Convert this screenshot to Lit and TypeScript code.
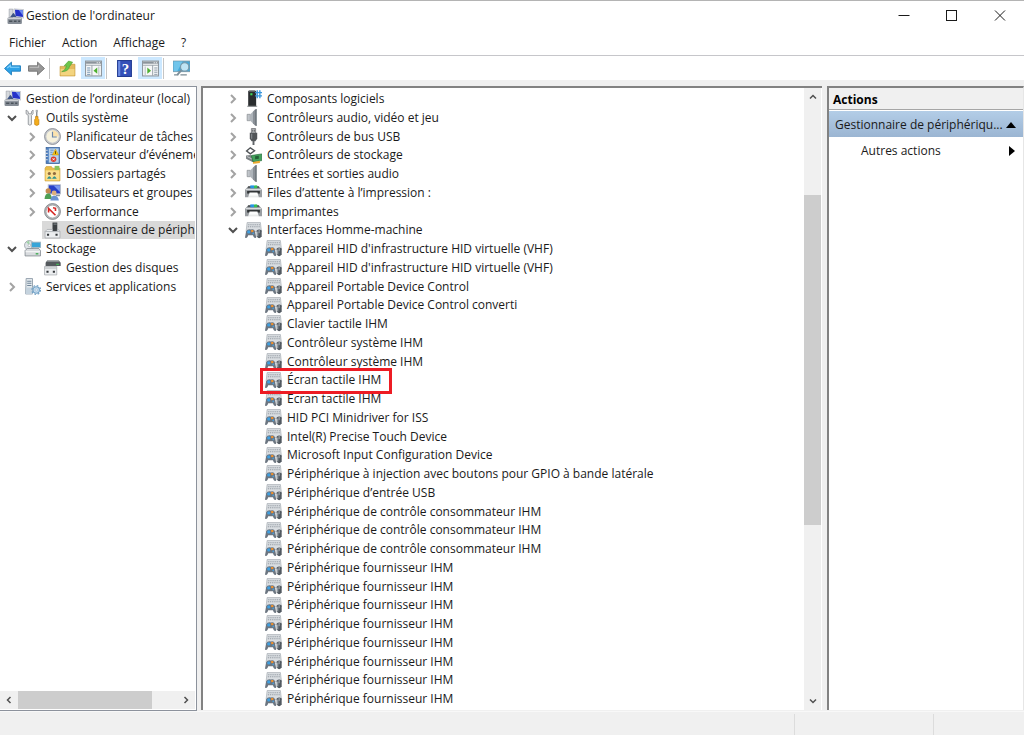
import { LitElement, html, svg, css, nothing } from "lit";
import { customElement, property } from "lit/decorators.js";

const ICONS: Record<string, unknown> = {
  computer: svg`
    <path d="M6.500 .8 L15.800 1.500 V9.500 L7 8.500Z" fill="#e4e6ea" stroke="#a9adb5" stroke-width=".5"/>
    <path d="M7.500 1.600 L15 2.200 V8.500 L8 7.500Z" fill="#2531c9"/><path d="M11 1.900 L15 2.200 V7Z" fill="#6f8df0"/>
    <path d="M2 1 H5.500 V9 H2Z" fill="#d5d8dc" stroke="#8f949c" stroke-width=".5"/>
    <path d="M6 4.500 L9 8.500 H3Z" fill="#3c5384"/>
    <rect x=".5" y="9" width="13.500" height="6" rx="1" fill="#858c95"/><path d="M1 10 H13.500" stroke="#d5d8db"/>
    <path d="M2 12.500 H5 M6.500 12.500 H9 M10.500 12.500 H12.500" stroke="#4a525b" stroke-width="1.300"/>`,
  tools: svg`
    <path d="M2 1 V4.500 L4 6 V14.500 Q5.500 16 7 14.500 V6 L8.500 4.500 V1 L7 2.500 V4.500 H4 V2.500Z" fill="#e6e8e9" stroke="#8b8f93" stroke-width=".8"/>
    <path d="M12 1 V8" stroke="#7d8388" stroke-width="1.200"/><path d="M10.800 7 H13.200 V9 L14 10 V14.500 Q12 16.500 10 14.500 V10 L10.800 9Z" fill="#f3ad1d" stroke="#c27b08" stroke-width=".6"/>
    <path d="M11 .8 H13 V3 H11Z" fill="#a9adb1"/>`,
  clock: svg`
    <circle cx="8" cy="8" r="7.500" fill="#c5c8cd" stroke="#84888f" stroke-width=".8"/><circle cx="8" cy="8" r="5.800" fill="#f6f1dc"/>
    <path d="M8 2.200 A5.800 5.800 0 0 1 13.800 8 H8Z" fill="#fbe3ae"/><path d="M8 3.500 V8.500 H12" fill="none" stroke="#6b87ab" stroke-width="1.100"/>`,
  events: svg`
    <rect x="2" y=".5" width="12.500" height="15" fill="#4d7fc0" stroke="#355f99" stroke-width=".7"/><rect x="4.500" y="1.300" width="9.300" height="13.400" fill="#b9d2ea"/>
    <path d="M6 3 H9 M6 5 H8 M6 7 H8" stroke="#5f8fc4" stroke-width=".8"/>
    <path d="M1 3 H3.500 M1 6 H3.500 M1 9 H3.500 M1 12 H3.500" stroke="#d8dde3"/><path d="M10.800 2 L13.800 7.500 H7.800Z" fill="#f9c516" stroke="#b58500" stroke-width=".4"/>
    <path d="M10.800 4 V6.500" stroke="#5b4700" stroke-width=".9"/><circle cx="9" cy="11.500" r="2.600" fill="#db3a2d"/><path d="M8 10.500 L10 12.500 M10 10.500 L8 12.500" stroke="#fff" stroke-width=".8"/>`,
  shared: svg`
    <path d="M1 3 L2 1.500 H7 L8 3 H15 V15 H1Z" fill="#e8bd48" stroke="#c99c33" stroke-width=".6"/><path d="M10 .8 H14.500 V5 H10Z" fill="#89c25b"/><path d="M1.500 5 H14.500 V14.500 H1.500Z" fill="#fbdf8b"/>
    <circle cx="5" cy="8" r="1.500" fill="#8f6a3e"/><circle cx="9.800" cy="8" r="1.500" fill="#8f6a3e"/><path d="M2.800 13 Q5 8 7.200 13Z" fill="#329390"/><path d="M7.600 13 Q9.800 8 12 13Z" fill="#329390"/>`,
  users: svg`
    <rect x="4" y=".8" width="11.500" height="8.500" fill="#2740c9" stroke="#b7bdc9" stroke-width=".9"/><path d="M9 1.300 H15 V7.500Z" fill="#7998ef"/><path d="M11 10 H15 V11.500 H11Z" fill="#8c939d"/>
    <circle cx="4" cy="6.500" r="2.500" fill="#c48b50"/><path d="M.5 14 Q1 9 4 9 Q7 9 7.500 14Z" fill="#4e9f54"/>
    <circle cx="9.500" cy="8.500" r="2.300" fill="#deb07c"/><path d="M6 15.500 Q6.500 11 9.500 11 Q13.500 11 14 15.500Z" fill="#6a93d2"/>`,
  perf: svg`
    <circle cx="8" cy="8" r="7.500" fill="#b3b6b9" stroke="#75797d" stroke-width=".7"/><circle cx="8" cy="8" r="6" fill="#fff" stroke="#8f9396" stroke-width=".5"/>
    <path d="M4.300 9 V5 L10.800 11.500 M10.800 7.500 V5 L8.500 4.500" fill="none" stroke="#d62522" stroke-width="1.500"/>`,
  device: svg`
    <path d="M8 .5 H12.500 V9 H8Z" fill="#3c4043"/><path d="M9 2 H12" stroke="#7f8589"/><path d="M1 9 L3 7 H8 V9 H12.500 V7 H13.500 L15 9 V15 H1Z" fill="#eceef0" stroke="#9a9ea3" stroke-width=".6"/>
    <path d="M1 9 H15" stroke="#b4b8bc"/><path d="M2.800 11 H4.800 V13 H2.800Z M10.800 11 H12.800 V13 H10.800Z" fill="#33373a"/>`,
  storage: svg`
    <circle cx="5" cy="5" r="4.500" fill="#dfe4e8" stroke="#8f979e" stroke-width=".7"/><path d="M5 5 L2 1.800 L5 .8Z" fill="#9fd3a6"/><circle cx="5" cy="5" r="1.200" fill="#fff" stroke="#8f979e" stroke-width=".5"/>
    <rect x="7" y="2" width="8.800" height="5" fill="#38a5d8" stroke="#a6b5bf" stroke-width=".8"/>
    <path d="M1 10 L3 8 H14 L15.500 10 V15 H1Z" fill="#d8dbde" stroke="#7b8188" stroke-width=".7"/><path d="M1.500 11 H15" stroke="#f8f9fa"/><path d="M11 13 H13.500" stroke="#33a946" stroke-width="1.200"/>`,
  disk: svg`
    <path d="M3 1.500 H14 L15.700 3.500 V6.500 H1.500 V3.500Z" fill="#54595d"/><path d="M3 2 H14" stroke="#a3a8ac"/><path d="M11.500 5 H14" stroke="#45cb5a"/>
    <path d="M.5 7 H12 V15 H.5Z" fill="#eceef0" stroke="#9b9fa4" stroke-width=".6"/><path d="M.5 8.500 H12" stroke="#b5b9bd"/><path d="M2.300 11 H4.300 V13 H2.300Z M8.300 11 H10.300 V13 H8.300Z" fill="#33373a"/>`,
  services: svg`
    <path d="M2 .5 H8 V15 H1.500Z" fill="#e4eaee" stroke="#8a98a5" stroke-width=".8"/><path d="M3 3 H7 M3 5 H7 M3 7 H7" stroke="#71869a"/>
    <path d="M2 9 H8 V15 H1.500Z" fill="#c5d3de"/><circle cx="11.500" cy="11.300" r="4.100" fill="none" stroke="#6f9fc4" stroke-width="1.100" stroke-dasharray="1.600 1.620"/>
    <circle cx="11.500" cy="11.300" r="3" fill="#c6dcef" stroke="#6f9fc4" stroke-width="1"/><circle cx="11.500" cy="11.300" r="1.100" fill="#fff" stroke="#6f9fc4" stroke-width=".5"/>`,
  software: svg`
    <path d="M3 1 L4 .5 H9.500 L10.500 1.500 V15.500 H3Z" fill="#2a2d2f"/><path d="M3.500 1.300 H9.500" stroke="#6d7275" stroke-width=".8"/><rect x="5" y="3" width="2" height="2" fill="#3ed756"/><path d="M2 15.300 H11.500" stroke="#8a8f92" stroke-width=".9"/>
    <path d="M9.500 2.500 H16 M9.500 5.500 H16 M11.500 .3 V7.700 M14 .3 V7.700" stroke="#3b97dc" stroke-width="1.300"/>`,
  audio: svg`
    <path d="M2 5 H5 V11 H2Z" fill="#c0c5ca" stroke="#81868b" stroke-width=".6"/><path d="M5 5 L9.500 .5 V15.500 L5 11Z" fill="#aeb4ba"/><path d="M7.500 2.500 L9.500 .5 V15.500 L7.500 13.500Z" fill="#8a9097"/>
    <path d="M9.500 .3 H11.300 V15.700 H9.500Z" fill="#5f666e"/><path d="M10.700 1 V15" stroke="#a9afb5" stroke-width=".7"/>`,
  usb: svg`
    <path d="M6 .5 H10 V5 H6Z" fill="#c3c6c8" stroke="#77797c" stroke-width=".8"/><path d="M7.300 1.500 V3.500 M8.800 1.500 V3.500" stroke="#4a4d4f" stroke-width=".8"/>
    <path d="M4.500 4.500 H11.500 V10 L9.800 12.500 H6.200 L4.500 10Z" fill="#515558"/><path d="M6.300 5.500 V10" stroke="#8b9094"/><path d="M8 12 V16" stroke="#606467" stroke-width="1.800"/>`,
  controller: svg`
    <path d="M5 .8 L9 3.500 L5 6.500 L1.500 3.800Z" fill="#fff" stroke="#505457" stroke-width="1.300"/><path d="M1 8 L5 7.500 L9 10 V13 L7 14 L1 11Z" fill="#7d8285"/><path d="M2 9 L7 11.500" stroke="#d3d6d8" stroke-width=".8"/>
    <path d="M6 8 L15.800 6.500 V12.800 L7.500 14Z" fill="#43a25c" stroke="#1f6435" stroke-width=".6"/><path d="M9.500 8.800 L13 8.300 V11 L9.500 11.500Z" fill="#235f36"/><path d="M7.500 14 L14 13 V15 L7.500 15.800Z" fill="#eaa92e"/>`,
  printer: svg`
    <path d="M3 2 H13 L16 5.500 V12.500 H0 V5.500Z" fill="#9a9ea2"/><path d="M3 2 H13 L13.500 3.800 H2.500Z" fill="#505558"/><path d="M5 1.300 H8.500 V4 H5Z" fill="#2795e3"/><path d="M8.500 1.300 H11.500 V4 H8.500Z" fill="#35c056"/>
    <path d="M1 5.300 H15" stroke="#dfe2e4"/><path d="M2 6.500 H14 V9 H2Z" fill="#303436"/><path d="M4.300 8 H11.700 L13 13 H3Z" fill="#fbfcfc"/><path d="M3.500 11.500 H12.500" stroke="#d4d7d9" stroke-width=".6"/>`,
  hid: svg`
    <path d="M2 .5 H14.500 L15.500 9 H1Z" fill="#d9dde1" stroke="#a2a8ae" stroke-width=".6"/><path d="M3 2.500 H14 M2.700 4.500 H14.300" stroke="#969da5" stroke-width="1" stroke-dasharray="1.200 .8"/>
    <path d="M0 14.500 L1 9 Q2.500 6 5.500 7 Q8.500 6 9.500 9 L10.500 14.500 Q8.500 16.500 7.500 12.500 H3 Q2 16.500 0 14.500Z" fill="#6b7580"/>
    <circle cx="3.500" cy="9.300" r="1.500" fill="#3f9fe0"/><path d="M5.800 7.500 H7.800 V9.500 H5.800Z" fill="#f0912c"/><path d="M7 10 H8.500 V11.500 H7Z" fill="#4b9fd8"/>
    <path d="M11 8 Q13.300 6 15.700 8 V13.500 Q13.300 17 11 13.500Z" fill="#515961"/><path d="M13.300 7.500 V10.500 M12 9 V13.500" stroke="#b8c0c7" stroke-width=".8"/>`,
  back: svg`<path d="M.5 8 L7 2 V5.500 H15.500 V10.500 H7 V14Z" fill="#2da2e8" stroke="#2380be" stroke-width=".9"/><path d="M3 7.500 L6 5 V6.800 H14.500" fill="none" stroke="#88d3fb"/>`,
  forward: svg`<path d="M15.500 8 L9 2 V5.500 H.5 V10.500 H9 V14Z" fill="#969696" stroke="#767676" stroke-width=".9"/><path d="M1.500 6.800 H10 V5" fill="none" stroke="#c3c3c3"/>`,
  folderup: svg`
    <path d="M1 6 H6 L7 4 H15 V15 H1Z" fill="#e3b95c" stroke="#c39431" stroke-width=".6"/><path d="M1.500 8.500 H14.500 V14.500 H1.500Z" fill="#f3d47f"/>
    <path d="M2.500 11 Q6.500 9.500 7 5.500 H4.800 L9 1 L12.800 2 L10.500 5.500 H10 Q9.500 11 2.500 11Z" fill="#6cc64b" stroke="#43992d" stroke-width=".5"/>`,
  paneleft: svg`
    <rect x=".5" y="1" width="15" height="14" fill="#f7f8f9" stroke="#8f979e"/><path d="M1 2.500 H15" stroke="#8b939a" stroke-width="2"/><path d="M11 2.500 H12 M13 2.500 H14" stroke="#fff"/>
    <path d="M1 5 H15 M6.500 5 V15" stroke="#a1a9b0"/><path d="M2 7.500 H5 M2 9.500 H5 M2 11.500 H5 M2 13.500 H5" stroke="#6c8fae" stroke-width=".9"/><path d="M13 6 V14.500" stroke="#b9bfc5"/><path d="M11.500 7 V13 L8 10Z" fill="#4caf2f"/>`,
  help: svg`<rect x="1.500" y=".5" width="13" height="15" fill="#3450b8" stroke="#233c92"/><path d="M2 1 H4 V15 H2Z" fill="#6d8ce2"/><text x="9" y="13" font-family="Liberation Serif, serif" font-weight="700" font-size="14" text-anchor="middle" fill="#fff">?</text>`,
  paneright: svg`
    <rect x=".5" y="1" width="15" height="14" fill="#f7f8f9" stroke="#8f979e"/><path d="M1 2.500 H15" stroke="#8b939a" stroke-width="2"/><path d="M11 2.500 H12 M13 2.500 H14" stroke="#fff"/>
    <path d="M1 5 H15 M10 5 V15" stroke="#a1a9b0"/><path d="M11.500 7.500 H14.500 M11.500 9.500 H14.500 M11.500 11.500 H14.500 M11.500 13.500 H14.500" stroke="#8898a5" stroke-width=".9"/><path d="M3 6 V14.500" stroke="#b9bfc5"/><path d="M5 7 V13 L8.500 10Z" fill="#4caf2f"/>`,
  scan: svg`
    <rect x="0" y="1" width="16" height="10" fill="#45a9da" stroke="#7d97a5" stroke-width=".8"/><path d="M.5 1.500 H9 L4 10.500 H.5Z" fill="#71c5eb"/><path d="M1 14 H5 M7 14 H13" stroke="#7b8b94" stroke-width="1.200"/>
    <path d="M8 9.500 L4 14" stroke="#7b8d98" stroke-width="1.700"/><circle cx="11" cy="6.500" r="3.900" fill="#bfe4f5" stroke="#7d97a5" stroke-width="1"/>`,
};

const icon = (name: string) =>
  html`<svg class="icon" viewBox="0 0 16 16" aria-hidden="true">${ICONS[name]}</svg>`;

const CHEVRONS: Record<string, string> = {
  right: "M6 4 L10 8 L6 12",
  down: "M4 6 L8 10 L12 6",
  left: "M10 4 L6 8 L10 12",
  up: "M4 10 L8 6 L12 10",
};
const chevron = (dir: string) =>
  html`<svg class="chev to-${dir}" viewBox="0 0 16 16" aria-hidden="true"><path d=${CHEVRONS[dir]} /></svg>`;

interface Node {
  level: number;
  icon: string;
  label: string;
  state?: "open" | "closed";
  selected?: boolean;
  marked?: boolean;
}

const n = (level: number, ic: string, label: string, state?: "open" | "closed", extra: Partial<Node> = {}): Node =>
  ({ level, icon: ic, label, state, ...extra });

const CONSOLE: Node[] = [
  n(0, "computer", "Gestion de l’ordinateur (local)"),
  n(1, "tools", "Outils système", "open"),
  n(2, "clock", "Planificateur de tâches", "closed"),
  n(2, "events", "Observateur d’événements", "closed"),
  n(2, "shared", "Dossiers partagés", "closed"),
  n(2, "users", "Utilisateurs et groupes locaux", "closed"),
  n(2, "perf", "Performance", "closed"),
  n(2, "device", "Gestionnaire de périphériques", undefined, { selected: true }),
  n(1, "storage", "Stockage", "open"),
  n(2, "disk", "Gestion des disques"),
  n(1, "services", "Services et applications", "closed"),
];

const HID_DEVICES = [
  "Appareil HID d'infrastructure HID virtuelle (VHF)",
  "Appareil HID d'infrastructure HID virtuelle (VHF)",
  "Appareil Portable Device Control",
  "Appareil Portable Device Control converti",
  "Clavier tactile IHM",
  "Contrôleur système IHM",
  "Contrôleur système IHM",
  "Écran tactile IHM",
  "Écran tactile IHM",
  "HID PCI Minidriver for ISS",
  "Intel(R) Precise Touch Device",
  "Microsoft Input Configuration Device",
  "Périphérique à injection avec boutons pour GPIO à bande latérale",
  "Périphérique d’entrée USB",
  ...Array(3).fill("Périphérique de contrôle consommateur IHM"),
  ...Array(8).fill("Périphérique fournisseur IHM"),
];

const DEVICES: Node[] = [
  n(1, "software", "Composants logiciels", "closed"),
  n(1, "audio", "Contrôleurs audio, vidéo et jeu", "closed"),
  n(1, "usb", "Contrôleurs de bus USB", "closed"),
  n(1, "controller", "Contrôleurs de stockage", "closed"),
  n(1, "audio", "Entrées et sorties audio", "closed"),
  n(1, "printer", "Files d’attente à l’impression :", "closed"),
  n(1, "printer", "Imprimantes", "closed"),
  n(1, "hid", "Interfaces Homme-machine", "open"),
  ...HID_DEVICES.map((label, i) => n(2, "hid", label, undefined, { marked: i === 7 })),
];

const shared = css`
  * { box-sizing: border-box; }
  button {
    font: inherit; color: inherit; background: none; border: 0; padding: 0; margin: 0;
    display: flex; align-items: center;
  }
  .icon { width: 17px; height: 17px; flex: none; display: block; }
  .chev { width: 16px; height: 16px; flex: none; display: block; fill: none; stroke: #505050; stroke-width: 2; }
`;

@customElement("console-tree")
export class ConsoleTree extends LitElement {
  @property({ attribute: false }) nodes: Node[] = [];
  @property() label = "";

  static styles = [
    shared,
    css`
      :host { display: block; min-width: 0; overflow: hidden; }
      .tree { list-style: none; margin: 0; padding: 0; }
      .row { height: 19px; display: flex; align-items: center; padding-left: 4px; }
      .row:nth-child(4n) { height: 18px; }
      .level2 { padding-left: 24px; }
      .toggle { width: 16px; height: 16px; flex: none; margin-right: 4px; }
      .chev.to-right { stroke: #a3a3a3; }
      .item { display: flex; align-items: center; gap: 5px; flex: none; height: 100%; white-space: nowrap; }
      .selected { background: #d9d9d9; margin-left: -2px; padding-left: 2px; }
      .marked { position: relative; }
      .marked::after { content: ""; position: absolute; inset: -3px -11px -5px -5px; border: 3px solid #ed1c24; z-index: 1; }
    `,
  ];

  render() {
    return html`<ul class="tree" role="tree" aria-label=${this.label}>
      ${this.nodes.map(
        (node) => html`<li class="row level${node.level}" role="treeitem" aria-selected=${node.selected ? "true" : "false"}>
          ${node.level === 0
            ? nothing
            : node.state
              ? html`<button class="toggle" aria-label="Développer ou réduire">${chevron(node.state === "open" ? "down" : "right")}</button>`
              : html`<span class="toggle"></span>`}
          <span class="item ${node.selected ? "selected" : ""} ${node.marked ? "marked" : ""}">${icon(node.icon)}<span>${node.label}</span></span>
        </li>`,
      )}
    </ul>`;
  }
}

@customElement("app-root")
export class AppRoot extends LitElement {
  static styles = [
    shared,
    css`
      :host {
        display: flex; flex-direction: column; height: 100vh; overflow: hidden; box-sizing: border-box;
        background: #f0f0f0; color: #1a1a1a; border-top: 1px solid #b4b4b4;
        font: 12px/18px "Open Sans", "Noto Sans", sans-serif;
      }
      .titlebar { flex: none; height: 30px; display: flex; align-items: center; background: #fff; padding-left: 7px; }
      .title { flex: 1; margin: 0 0 0 2px; font: inherit; }
      .caption { width: 48px; height: 100%; justify-content: center; }
      .caption svg { width: 12px; height: 12px; fill: none; stroke: #1a1a1a; stroke-width: 1; }
      .menubar { flex: none; height: 25px; display: flex; align-items: center; gap: 16px; padding-left: 9px; background: #fff; border-bottom: 1px solid #c6c6ca; }
      .toolbar { flex: none; height: 24px; display: flex; align-items: center; background: #fff; }
      .tool { width: 24px; height: 22px; justify-content: center; }
      .tool.on { background: #cce8ff; margin-left: 2px; }
      .sep { width: 1px; height: 21px; background: #c5c5c5; margin: 0 5px 0 1px; }
      .panes { flex: 1; min-height: 0; display: grid; grid-template-columns: 197px minmax(0, 1fr) 197px; padding-top: 6px; }
      .left { display: flex; flex-direction: column; min-height: 0; background: #fff; border: solid #8c929c; border-width: 1px 1px 1px 0; margin-right: 0; padding: 2px 1px 1px 0; }
      .left console-tree { flex: 1; }
      .center { display: flex; min-height: 0; background: #fff; margin: 0 5px 1px 4px; border: solid #828282; border-width: 2px 0 0 2px; }
      .center console-tree { flex: 1; padding: 1px 0 0 18px; }
      .actions { background: #fff; border: solid #828282; border-width: 2px 0 0 2px; margin-bottom: 1px; border-right: 1px solid #e6e6e6; min-width: 0; }
      .hscroll { flex: none; height: 18px; display: flex; background: #f0f0f0; }
      .vscroll { flex: none; width: 17px; margin-right: 1px; display: flex; flex-direction: column; background: #f0f0f0; }
      .arrow { width: 18px; height: 18px; flex: none; justify-content: center; }
      .vscroll .arrow { width: 17px; }
      .arrow .chev { width: 12px; height: 12px; }
      .track { flex: 1; display: flex; }
      .vscroll .track { flex-direction: column; }
      .lead { flex: 89; }
      .vthumb { flex: 329; background: #cdcdcd; }
      .trail { flex: 167; }
      .hthumb { flex: 134; background: #cdcdcd; }
      .htrail { flex: 25; }
      .heading { margin: 0; height: 22px; padding-left: 4px; background: #f0f0f0; border-bottom: 1px solid #a6a6a6; font-size: 12px; line-height: 24px; font-weight: 700; color: #000; }
      .group { width: 100%; height: 26px; margin-top: 1px; padding: 2px 7px 0 6px; justify-content: space-between; background: linear-gradient(#b3cde7, #9bb5d2); }
      .more { width: 100%; height: 26px; padding: 2px 8px 0 32px; justify-content: space-between; }
      .tri { flex: none; display: block; fill: #000; }
      .statusbar { flex: none; height: 24px; display: grid; grid-template-columns: minmax(0, 1fr) 139px 90px; border-top: 1px solid #f8f8f8; }
      .cell { border-right: 1px solid #dcdcdc; margin-top: 2px; }
      .cell:last-child { border: 0; }
    `,
  ];

  render() {
    return html`
      <header class="titlebar">
        ${icon("computer")}
        <h1 class="title">Gestion de l'ordinateur</h1>
        <button class="caption" aria-label="Réduire"><svg viewBox="0 0 12 12"><path d="M.5 5.500 H11.500" /></svg></button>
        <button class="caption" aria-label="Agrandir"><svg viewBox="0 0 12 12"><rect x=".5" y=".5" width="10" height="10" /></svg></button>
        <button class="caption" aria-label="Fermer"><svg viewBox="0 0 12 12"><path d="M1 .5 L11 10.500 M11 .5 L1 10.500" /></svg></button>
      </header>
      <nav class="menubar">
        ${["Fichier", "Action", "Affichage", "?"].map((m) => html`<button>${m}</button>`)}
      </nav>
      <div class="toolbar" role="toolbar">
        <button class="tool" aria-label="Précédent">${icon("back")}</button>
        <button class="tool" aria-label="Suivant">${icon("forward")}</button>
        <span class="sep"></span>
        <button class="tool" aria-label="Dossier parent">${icon("folderup")}</button>
        <button class="tool on" aria-label="Arborescence">${icon("paneleft")}</button>
        <span class="sep"></span>
        <button class="tool" aria-label="Aide">${icon("help")}</button>
        <button class="tool on" aria-label="Volet Actions">${icon("paneright")}</button>
        <span class="sep"></span>
        <button class="tool" aria-label="Rechercher les modifications">${icon("scan")}</button>
      </div>
      <main class="panes">
        <section class="left">
          <console-tree .nodes=${CONSOLE} label="Console"></console-tree>
          <div class="hscroll">
            <button class="arrow" aria-label="Gauche">${chevron("left")}</button>
            <div class="track"><div class="hthumb"></div><div class="htrail"></div></div>
            <button class="arrow" aria-label="Droite">${chevron("right")}</button>
          </div>
        </section>
        <section class="center">
          <console-tree .nodes=${DEVICES} label="Périphériques"></console-tree>
          <div class="vscroll">
            <button class="arrow" aria-label="Haut">${chevron("up")}</button>
            <div class="track"><div class="lead"></div><div class="vthumb"></div><div class="trail"></div></div>
            <button class="arrow" aria-label="Bas">${chevron("down")}</button>
          </div>
        </section>
        <aside class="actions">
          <h2 class="heading">Actions</h2>
          <button class="group"><span>Gestionnaire de périphériqu...</span><svg class="tri" width="10" height="6" viewBox="0 0 10 6"><path d="M5 0 L10 6 H0Z" /></svg></button>
          <button class="more"><span>Autres actions</span><svg class="tri" width="6" height="10" viewBox="0 0 6 10"><path d="M0 0 L6 5 L0 10Z" /></svg></button>
        </aside>
      </main>
      <footer class="statusbar"><span class="cell"></span><span class="cell"></span><span class="cell"></span></footer>
    `;
  }
}
